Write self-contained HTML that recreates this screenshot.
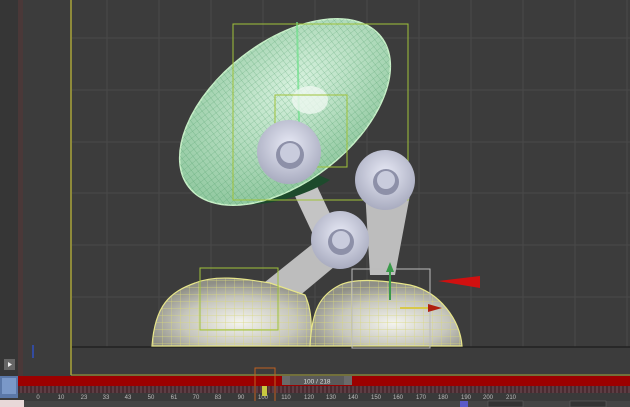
<!DOCTYPE html><html><head><style>
html,body{margin:0;padding:0;width:630px;height:407px;overflow:hidden;background:#3b3b3b;font-family:"Liberation Sans",sans-serif}
</style></head><body>
<svg width="630" height="407" viewBox="0 0 630 407" xmlns="http://www.w3.org/2000/svg">
<defs>
<pattern id="wire" width="5" height="5" patternUnits="userSpaceOnUse"><path d="M0 0H5M0 0V5" stroke="#2f8a4f" stroke-width="0.6" fill="none"/></pattern>
<pattern id="ywire" width="9" height="7" patternUnits="userSpaceOnUse"><path d="M0 0H9M0 0V7" stroke="#d9d77a" stroke-width="0.7" fill="none"/></pattern>
<pattern id="ticks" width="4" height="7" patternUnits="userSpaceOnUse"><path d="M1 0V7" stroke="#7a5a60" stroke-width="0.8"/></pattern>
<radialGradient id="dome" cx="0.55" cy="0.65" r="0.6"><stop offset="0" stop-color="#f4f4ee"/><stop offset="0.6" stop-color="#c6c6bd"/><stop offset="1" stop-color="#8f8f86"/></radialGradient>
<radialGradient id="shade" cx="0.6" cy="0.4" r="0.65"><stop offset="0" stop-color="#d8f2df"/><stop offset="1" stop-color="#8fc79e"/></radialGradient>
<radialGradient id="disc" cx="0.5" cy="0.4" r="0.6"><stop offset="0" stop-color="#e8eaf6"/><stop offset="1" stop-color="#a9acc0"/></radialGradient>
</defs>
<rect x="0" y="0" width="630" height="376" fill="#3c3c3c"/>
<rect x="0" y="0" width="18" height="376" fill="#363636"/>
<rect x="18" y="0" width="5" height="376" fill="#4a3838"/>
<g stroke="#4a4a4a" stroke-width="1">
<path d="M107 0V347M159 0V347M211 0V347M263 0V347M315 0V347M367 0V347M419 0V347M471 0V347M523 0V347M575 0V347M627 0V347"/>
<path d="M72 38H630M72 90H630M72 142H630M72 193H630M72 245H630M72 297H630"/>
</g>
<line x1="72" y1="347" x2="630" y2="347" stroke="#222" stroke-width="1.5"/>
<line x1="71" y1="0" x2="71" y2="375" stroke="#a9a43a" stroke-width="1.5"/>
<line x1="71" y1="375" x2="630" y2="375" stroke="#a9a43a" stroke-width="1"/>
<!-- arms -->
<path d="M255 290 L330 230 L352 252 L280 312 Z" fill="#bdbdbd"/>
<path d="M278 160 L300 150 L340 235 L318 245 Z" fill="#c4c4c4"/>
<path d="M365 190 L410 195 L395 275 L370 275 Z" fill="#bdbdbd"/>
<!-- shade -->
<path d="M215 195 C240 215 300 200 330 180 L260 150 Z" fill="#1d4a2c"/>
<g transform="rotate(-38 285 112)">
<ellipse cx="285" cy="112" rx="122" ry="70" fill="url(#shade)" stroke="#c8f0c8" stroke-width="1.5"/>
<ellipse cx="285" cy="112" rx="122" ry="70" fill="url(#wire)" opacity="0.55"/>
</g>
<path d="M297 22 L300 170" stroke="#6ee08a" stroke-width="2" opacity="0.7"/>
<ellipse cx="310" cy="100" rx="18" ry="14" fill="#eef8f0" opacity="0.8"/>
<rect x="233" y="24" width="175" height="176" fill="none" stroke="#9fc23a" stroke-width="1"/>
<rect x="275" y="95" width="72" height="72" fill="none" stroke="#9fc23a" stroke-width="1"/>
<!-- discs -->
<circle cx="289" cy="152" r="32" fill="url(#disc)"/><circle cx="290" cy="155" r="14" fill="#8d90a8"/><circle cx="290" cy="153" r="10" fill="#c9ccdd"/>
<circle cx="385" cy="180" r="30" fill="url(#disc)"/><circle cx="386" cy="182" r="13" fill="#8d90a8"/><circle cx="386" cy="180" r="9" fill="#c9ccdd"/>
<circle cx="340" cy="240" r="29" fill="url(#disc)"/><circle cx="341" cy="242" r="13" fill="#8d90a8"/><circle cx="341" cy="240" r="9" fill="#c9ccdd"/>
<!-- bases -->
<path d="M152 346 C155 305 170 292 195 283 C215 275 240 278 270 283 L305 295 C312 310 312 330 310 346 Z" fill="url(#dome)"/>
<path d="M152 346 C155 305 170 292 195 283 C215 275 240 278 270 283 L305 295 C312 310 312 330 310 346 Z" fill="url(#ywire)" stroke="#e8e68a" stroke-width="1.2"/>
<path d="M310 346 C312 310 320 295 340 285 C355 278 380 280 410 285 C440 292 460 320 462 346 Z" fill="url(#dome)"/>
<path d="M310 346 C312 310 320 295 340 285 C355 278 380 280 410 285 C440 292 460 320 462 346 Z" fill="url(#ywire)" stroke="#e8e68a" stroke-width="1.2"/>
<rect x="200" y="268" width="78" height="62" fill="none" stroke="#9fc23a"/>
<rect x="352" y="269" width="78" height="79" fill="none" stroke="#bbb"/>
<path d="M390 300 V268" stroke="#3a9a4a" stroke-width="2"/><path d="M386 272 L390 262 L394 272Z" fill="#3a9a4a"/>
<path d="M400 308 H432" stroke="#d8c84a" stroke-width="2"/><path d="M428 304 L442 308 L428 312Z" fill="#b02010"/>
<path d="M438 281 L480 276 L480 288 Z" fill="#d01010"/>
<!-- bottom UI -->
<rect x="4" y="359" width="11" height="11" fill="#666"/><path d="M8 362 L12 364.5 L8 367Z" fill="#eee"/>
<path d="M33 345 V358" stroke="#3050c0" stroke-width="1.5"/>
<rect x="0" y="376" width="630" height="10" fill="#9c0000"/>
<rect x="0" y="376" width="18" height="22" fill="#5b78a8"/><rect x="2" y="378" width="14" height="16" fill="#7a98c8"/>
<rect x="282" y="376" width="70" height="9" fill="#5a5a5a"/>
<rect x="282" y="376" width="8" height="9" fill="#6a6a6a"/><rect x="344" y="376" width="8" height="9" fill="#6a6a6a"/>
<text x="317" y="383.5" font-size="6.5" fill="#ddd" text-anchor="middle">100 / 218</text>
<rect x="18" y="386" width="612" height="7" fill="#4a2a30"/>
<rect x="18" y="386" width="612" height="7" fill="url(#ticks)"/>
<rect x="18" y="393" width="612" height="8" fill="#3a3a3a"/>
<g font-size="6" fill="#bbb" text-anchor="middle">
<text x="38" y="399">0</text><text x="61" y="399">10</text><text x="84" y="399">23</text><text x="106" y="399">33</text><text x="128" y="399">43</text><text x="151" y="399">50</text><text x="174" y="399">61</text><text x="196" y="399">70</text><text x="218" y="399">83</text><text x="241" y="399">90</text><text x="263" y="399">100</text><text x="286" y="399">110</text><text x="309" y="399">120</text><text x="331" y="399">130</text><text x="353" y="399">140</text><text x="376" y="399">150</text><text x="398" y="399">160</text><text x="421" y="399">170</text><text x="443" y="399">180</text><text x="466" y="399">190</text><text x="488" y="399">200</text><text x="511" y="399">210</text>
</g>
<rect x="255" y="368" width="20" height="39" fill="none" stroke="#c06020" stroke-width="1"/>
<rect x="262" y="386" width="5" height="10" fill="#c8c840"/>
<rect x="0" y="401" width="630" height="6" fill="#444"/>
<rect x="0" y="400" width="24" height="7" fill="#e8d8d8"/>
<rect x="460" y="401" width="8" height="6" fill="#5a5ac8"/>
<rect x="488" y="401" width="35" height="6" fill="#333" stroke="#666" stroke-width="0.5"/>
<rect x="570" y="401" width="36" height="6" fill="#333" stroke="#666" stroke-width="0.5"/>
</svg>
</body></html>
